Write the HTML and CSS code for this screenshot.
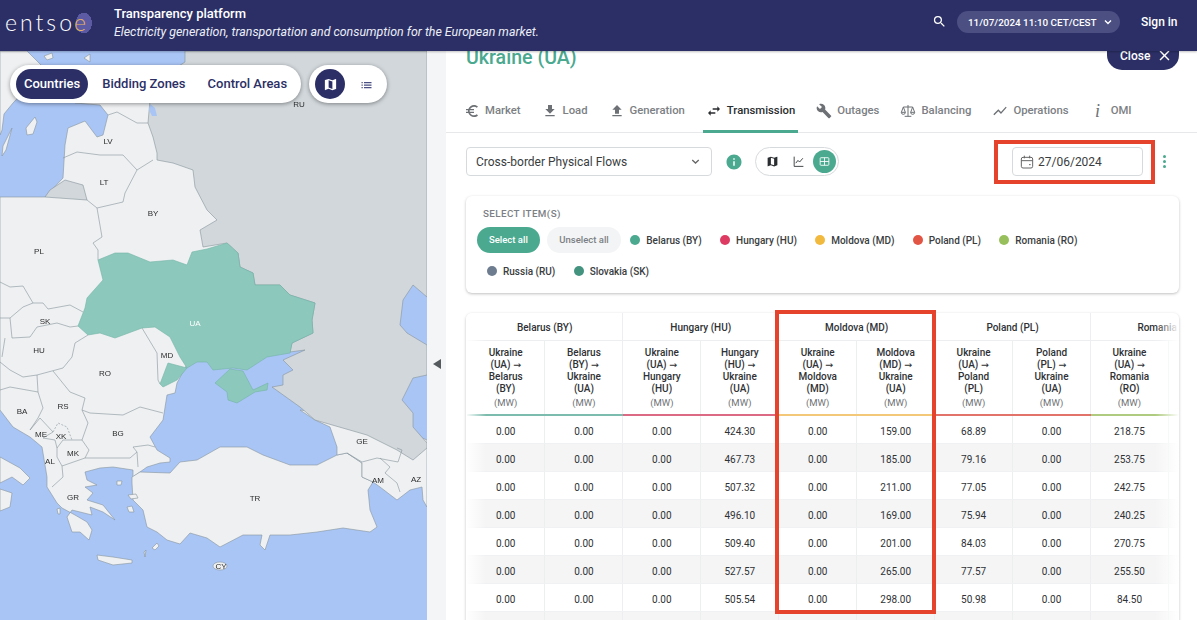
FILE: index.html
```html
<!DOCTYPE html>
<html lang="en">
  <head>
    <meta charset="UTF-8" />
    <title>ENTSO-E Transparency platform</title>
    <link rel="stylesheet" href="styles.css">
  </head>
  <body>
    <header class="topbar">
      <div class="logo">entso<span class="logo-e">e</span></div>
      <div class="brand">
        <div class="brand-title">Transparency platform</div>
        <div class="brand-sub">Electricity generation, transportation and consumption for the European market.</div>
      </div>
      <svg class="top-search" viewBox="0 0 24 24"><path d="M15.5 14h-.79l-.28-.27A6.47 6.47 0 0 0 16 9.5 6.5 6.5 0 1 0 9.5 16c1.61 0 3.09-.59 4.23-1.57l.27.28v.79l5 4.99L20.49 19l-4.99-5zm-6 0C7.01 14 5 11.99 5 9.5S7.01 5 9.5 5 14 7.01 14 9.5 11.99 14 9.5 14z"/></svg>
      <div class="time-pill"><span>11/07/2024 11:10 CET/CEST</span>
        <svg viewBox="0 0 10 10"><polyline points="2.5,3.8 5,6.2 7.5,3.8"/></svg>
      </div>
      <div class="sign-in">Sign in</div>
    </header>

    <main class="layout">
      <section class="map-panel">
        <svg class="map" viewBox="0 51 427 569">
          <rect class="sea" x="0" y="51" width="427" height="569"/>
          <!-- Sweden and Baltic islands -->
          <path class="land" d="M0 51 L27 51 L42 66 L30 85 L13 103 L4 114 L2 130 L0 135 Z"/>
          <path class="land" d="M26 128 L35 117 L37 122 L33 134 L27 135 Z"/>
          <path class="land" d="M12 128 L3 146 L2 156 L6 150 Z"/>
          <path class="land" d="M44 56 L52 53 L53 58 L47 60 Z"/>
          <path class="land" d="M84 58 L90 54 L90 62 Z"/>
          <!-- Main continent -->
          <path class="land" d="M0 197 L45 197 L63 178 L65 145 L68 128 L85 121 L97 137 L103 135 L108 115 L100 105 L75 103 L75 95 L190 95 L240 250 L200 340 L177 383 L175 393 L167 395 L163 420 L150 437 L157 450 L170 458 L170 462 L160 463 L147 467 L133 477 L133 470 L113 467 L100 468 L85 472 L87 480 L97 485 L85 487 L93 493 L87 500 L103 505 L115 520 L103 512 L90 507 L92 515 L72 510 L67 517 L72 532 L80 532 L89 540 L92 530 L87 522 L75 515 L62 508 L57 503 L47 487 L47 477 L42 447 L30 437 L13 427 L0 410 Z"/>
          <!-- Turkey -->
          <path class="land" d="M132 477 L140 472 L170 473 L180 462 L197 460 L220 447 L247 447 L263 455 L290 465 L317 465 L337 455 L347 453 L362 463 L362 477 L373 482 L368 490 L370 510 L377 527 L370 532 L343 528 L317 532 L290 535 L270 535 L265 550 L260 545 L262 535 L243 535 L220 547 L207 538 L190 533 L180 544 L167 540 L157 532 L147 527 L143 510 L133 500 L132 483 Z"/>
          <!-- Caucasus -->
          <path class="land" d="M300 410 L315 420 L330 427 L337 447 L337 455 L347 453 L362 463 L362 477 L373 482 L380 487 L397 500 L410 490 L422 487 L423 500 L427 507 L427 440 L380 420 Z"/>
          <!-- Italy -->
          <path class="land" d="M0 457 L20 468 L30 478 L23 485 L12 477 L0 483 Z"/>
          <path class="land" d="M0 489 L12 493 L10 507 L0 511 Z"/>
          <!-- Islands -->
          <path class="land" d="M97 555 L113 557 L132 560 L132 563 L113 565 L98 560 Z"/>
          <ellipse class="land" cx="220" cy="566" rx="7" ry="4"/>
          <path class="land" d="M152 548 L157 543 L159 546 L155 550 Z"/>
          <path class="land" d="M144 552 L146 550 L145 557 Z"/>
          <path class="land" d="M117 481 L122 481 L121 485 L117 485 Z"/>
          <path class="land" d="M128 495 L136 494 L138 498 L131 499 Z"/>
          <path class="land" d="M127 507 L132 506 L134 512 L129 512 Z"/>
          <path class="land" d="M57 509 L60 508 L60 514 L58 514 Z"/>
          <!-- Kaliningrad -->
          <path class="russia" d="M45 197 L50 190 L65 180 L83 185 L87 200 Z"/>
          <!-- Russia -->
          <path class="russia" d="M185 51 L185 62 L150 85 L150 100 L148 123 L153 137 L157 153 L157 160 L173 163 L193 170 L195 187 L207 210 L217 220 L200 230 L203 247 L227 243 L238 253 L240 267 L253 273 L255 285 L280 285 L290 295 L315 303 L312 320 L313 333 L292 343 L290 352 L305 350 L283 360 L293 370 L283 375 L283 385 L272 387 L300 407 L315 420 L367 435 L397 450 L413 460 L427 448 L427 443 L413 427 L413 413 L402 400 L413 378 L427 375 L427 345 L407 333 L400 325 L403 300 L413 285 L427 297 L427 51 Z"/>
          <path class="sea" d="M150 104 L155 108 L157 116 L152 116 L149 110 Z"/>
          <!-- Borders -->
          <g class="borders">
            <path d="M108 115 L117 112 L137 123 L148 123"/>
            <path d="M63 158 L77 152 L100 155 L123 155 L137 170 L153 160"/>
            <path d="M137 170 L125 193 L123 202 L97 208 L87 200"/>
            <path d="M97 208 L102 237 L93 243 L98 250 L98 260"/>
            <path d="M0 282 L10 287 L23 286 L33 303 L43 303 L48 309 L70 305 L83 312"/>
            <path d="M0 318 L10 318 L23 307 L33 303"/>
            <path d="M10 318 L12 338 L30 337 L37 327 L57 323 L70 327 L78 326"/>
            <path d="M88 335 L75 343 L72 357 L63 368 L37 375 L23 377 L10 370 L0 362"/>
            <path d="M5 338 L2 357"/>
            <path d="M53 371 L70 392 L85 398 L82 410 L90 413 L123 415 L140 407 L163 413"/>
            <path d="M37 375 L38 392 L10 387 L0 390"/>
            <path d="M38 392 L43 408 L38 418 L30 430"/>
            <path d="M82 410 L88 423 L82 440"/>
            <path d="M30 430 L40 418 L53 432 L43 438"/>
            <path d="M43 438 L55 440 L57 448"/>
            <path class="dashed" d="M53 432 L58 423 L67 427 L72 440"/>
            <path d="M57 448 L63 440 L82 440 L89 450 L85 458 L62 466 L57 457 L57 448"/>
            <path d="M62 466 L63 477 L52 487"/>
            <path d="M85 458 L130 458 L137 452 L133 447 L148 445 L155 447"/>
            <path d="M137 452 L138 467"/>
            <path d="M142 328 L157 353 L158 380 L160 384"/>
            <path d="M347 453 L362 462 L377 458 L398 462 L402 450 L397 448"/>
            <path d="M380 458 L390 467 L385 473 L397 483 L400 492"/>
          </g>
          <!-- Ukraine -->
          <path class="ua" d="M98 260 L115 253 L128 253 L150 262 L173 260 L187 265 L192 252 L207 249 L227 243 L238 253 L240 267 L253 273 L255 285 L280 285 L290 295 L315 303 L312 320 L313 333 L292 343 L290 353 L267 357 L247 370 L233 368 L213 370 L207 362 L197 362 L187 368 L180 357 L170 337 L155 327 L142 328 L115 338 L100 333 L88 335 L78 326 L85 308 L87 298 L103 280 Z"/>
          <path class="ua" d="M215 383 L230 369 L243 371 L253 390 L268 383 L267 390 L255 392 L237 403 L228 400 L227 392 Z"/>
          <path class="ua" d="M160 384 L168 363 L187 368 L177 380 L163 387 Z"/>
          <g class="labels">
            <text x="299" y="107">RU</text>
            <text x="108" y="144">LV</text>
            <text x="104" y="185">LT</text>
            <text x="153" y="216">BY</text>
            <text x="39" y="254">PL</text>
            <text x="45" y="324">SK</text>
            <text x="39" y="353">HU</text>
            <text x="105" y="376">RO</text>
            <text x="167" y="358">MD</text>
            <text class="label-ua" x="195" y="326">UA</text>
            <text x="22" y="414">BA</text>
            <text x="63" y="409">RS</text>
            <text x="41" y="437">ME</text>
            <text x="61" y="439">XK</text>
            <text x="73" y="456">MK</text>
            <text x="118" y="436">BG</text>
            <text x="50" y="464">AL</text>
            <text x="73" y="500">GR</text>
            <text x="255" y="501">TR</text>
            <text x="362" y="444">GE</text>
            <text x="378" y="483">AM</text>
            <text x="416" y="482">AZ</text>
            <text x="221" y="569">CY</text>
          </g>
        </svg>

        <div class="map-tools">
          <div class="pill">
            <span class="pill-item active">Countries</span>
            <span class="pill-item">Bidding Zones</span>
            <span class="pill-item">Control Areas</span>
          </div>
          <div class="pill">
            <span class="round-btn active">
              <svg viewBox="0 0 24 24"><path d="M20.5 3l-.16.03L15 5.1 9 3 3.36 4.9c-.21.07-.36.25-.36.48V20.5c0 .28.22.5.5.5l.16-.03L9 18.9l6 2.1 5.64-1.9c.21-.07.36-.25.36-.48V3.5c0-.28-.22-.5-.5-.5zM15 19l-6-2.11V5l6 2.11V19z"/></svg>
            </span>
            <span class="round-btn">
              <svg viewBox="0 0 24 24"><path d="M4 14h2v-2H4v2zm0 4h2v-2H4v2zm0-8h2V8H4v2zm4 4h12v-2H8v2zm0 4h12v-2H8v2zM8 8v2h12V8H8z"/></svg>
            </span>
          </div>
        </div>
      </section>

      <div class="divider"><span class="divider-arrow"></span></div>

      <section class="detail">
        <div class="title-row">
          <h1>Ukraine (UA)</h1>
          <div class="close-btn">Close
            <svg viewBox="0 0 24 24"><path d="M19 6.41L17.59 5 12 10.59 6.41 5 5 6.41 10.59 12 5 17.59 6.41 19 12 13.41 17.59 19 19 17.59 13.41 12z"/></svg>
          </div>
        </div>

        <nav class="tabs">
          <div class="tab"><svg viewBox="0 0 24 24"><path d="M15 18.5c-2.51 0-4.68-1.42-5.76-3.5H15v-2H8.58c-.05-.33-.08-.66-.08-1s.03-.67.08-1H15V9H9.24C10.32 6.92 12.5 5.5 15 5.5c1.61 0 3.09.59 4.23 1.57L21 5.3C19.41 3.87 17.3 3 15 3c-3.92 0-7.24 2.51-8.48 6H3v2h3.06c-.04.33-.06.66-.06 1s.02.67.06 1H3v2h3.52c1.24 3.49 4.56 6 8.48 6 2.31 0 4.41-.87 6-2.3l-1.77-1.77c-1.13.98-2.6 1.57-4.23 1.57z"/></svg>Market</div>
          <div class="tab"><svg viewBox="0 0 24 24"><path d="M19 9h-4V3H9v6H5l7 7 7-7zM5 18v2h14v-2H5z"/></svg>Load</div>
          <div class="tab"><svg viewBox="0 0 24 24"><path d="M9 16h6v-6h4l-7-7-7 7h4v6zm-4 2h14v2H5z"/></svg>Generation</div>
          <div class="tab active"><svg viewBox="0 0 24 24"><path d="M6.99 11L3 15l3.99 4v-3H14v-2H6.99v-3zM21 9l-3.99-4v3H10v2h7.01v3L21 9z"/></svg>Transmission</div>
          <div class="tab"><svg viewBox="0 0 24 24"><path d="M22.7 19l-9.1-9.1c.9-2.3.4-5-1.5-6.9-2-2-5-2.4-7.4-1.3L9 6 6 9 1.6 4.7C.4 7.1.9 10.1 2.9 12.1c1.9 1.9 4.6 2.4 6.9 1.5l9.1 9.1c.4.4 1 .4 1.4 0l2.3-2.3c.5-.4.5-1.1.1-1.4z"/></svg>Outages</div>
          <div class="tab"><svg class="line-icon" viewBox="0 0 24 24"><path d="M12 3v17M5 6h14M7 20h10M5 6l-3 8h6zM19 6l-3 8h6zM2 14a3 3 0 0 0 6 0M16 14a3 3 0 0 0 6 0"/></svg>Balancing</div>
          <div class="tab"><svg viewBox="0 0 24 24"><path d="M3.5 18.49l6-6.01 4 4L22 6.92l-1.41-1.41-7.09 7.97-4-4L2 16.99z"/></svg>Operations</div>
          <div class="tab"><span class="omi-i">i</span>OMI</div>
        </nav>

        <div class="controls">
          <div class="select">Cross-border Physical Flows
            <svg viewBox="0 0 10 10"><polyline points="2.5,3.8 5,6.2 7.5,3.8"/></svg>
          </div>
          <svg class="info" viewBox="0 0 24 24"><path d="M12 2C6.48 2 2 6.48 2 12s4.48 10 10 10 10-4.48 10-10S17.52 2 12 2zm1 15h-2v-6h2v6zm0-8h-2V7h2v2z"/></svg>
          <div class="view-switch">
            <span class="view-btn"><svg viewBox="0 0 24 24"><path d="M20.5 3l-.16.03L15 5.1 9 3 3.36 4.9c-.21.07-.36.25-.36.48V20.5c0 .28.22.5.5.5l.16-.03L9 18.9l6 2.1 5.64-1.9c.21-.07.36-.25.36-.48V3.5c0-.28-.22-.5-.5-.5zM15 19l-6-2.11V5l6 2.11V19z"/></svg></span>
            <span class="view-btn"><svg class="line-icon" viewBox="0 0 24 24"><path d="M4 3v18h17M7 15l4-5 3 3 6-7"/></svg></span>
            <span class="view-btn active"><svg class="line-icon" viewBox="0 0 24 24"><rect x="4" y="5" width="16" height="14" rx="1.5"/><path d="M4 12h16M12 5v14"/></svg></span>
          </div>
          <div class="date-field">
            <svg class="line-icon" viewBox="0 0 24 24"><rect x="3.5" y="5" width="17" height="16" rx="2.5"/><path d="M3.5 10h17M8 2.5v4M16 2.5v4M15 16h2.5"/></svg>
            27/06/2024
          </div>
          <div class="more"><i></i><i></i><i></i></div>
        </div>

        <div class="items-card">
          <div class="items-title">SELECT ITEM(S)</div>
          <div class="items-row">
            <span class="chip chip-on">Select all</span>
            <span class="chip chip-off">Unselect all</span>
            <span class="legend"><i class="dot dot-by"></i>Belarus (BY)</span>
            <span class="legend"><i class="dot dot-hu"></i>Hungary (HU)</span>
            <span class="legend"><i class="dot dot-md"></i>Moldova (MD)</span>
            <span class="legend"><i class="dot dot-pl"></i>Poland (PL)</span>
            <span class="legend"><i class="dot dot-ro"></i>Romania (RO)</span>
          </div>
          <div class="items-row items-row-second">
            <span class="legend"><i class="dot dot-ru"></i>Russia (RU)</span>
            <span class="legend"><i class="dot dot-sk"></i>Slovakia (SK)</span>
          </div>
        </div>

        <div class="table-card">
          <table>
            <thead>
              <tr class="group-row">
                <th colspan="2">Belarus (BY)</th>
                <th colspan="2">Hungary (HU)</th>
                <th colspan="2">Moldova (MD)</th>
                <th colspan="2">Poland (PL)</th>
                <th colspan="2">Romania (RO)</th>
              </tr>
              <tr class="sub-row">
                <th class="bar-by">Ukraine<br>(UA) <span class="arrow">→</span><br>Belarus<br>(BY)<small>(MW)</small></th>
                <th class="bar-by">Belarus<br>(BY) <span class="arrow">→</span><br>Ukraine<br>(UA)<small>(MW)</small></th>
                <th class="bar-hu">Ukraine<br>(UA) <span class="arrow">→</span><br>Hungary<br>(HU)<small>(MW)</small></th>
                <th class="bar-hu">Hungary<br>(HU) <span class="arrow">→</span><br>Ukraine<br>(UA)<small>(MW)</small></th>
                <th class="bar-md">Ukraine<br>(UA) <span class="arrow">→</span><br>Moldova<br>(MD)<small>(MW)</small></th>
                <th class="bar-md">Moldova<br>(MD) <span class="arrow">→</span><br>Ukraine<br>(UA)<small>(MW)</small></th>
                <th class="bar-pl">Ukraine<br>(UA) <span class="arrow">→</span><br>Poland<br>(PL)<small>(MW)</small></th>
                <th class="bar-pl">Poland<br>(PL) <span class="arrow">→</span><br>Ukraine<br>(UA)<small>(MW)</small></th>
                <th class="bar-ro">Ukraine<br>(UA) <span class="arrow">→</span><br>Romania<br>(RO)<small>(MW)</small></th>
                <th class="bar-ro"></th>
              </tr>
            </thead>
            <tbody>
              <tr><td>0.00</td><td>0.00</td><td>0.00</td><td>424.30</td><td>0.00</td><td>159.00</td><td>68.89</td><td>0.00</td><td>218.75</td><td></td></tr>
              <tr><td>0.00</td><td>0.00</td><td>0.00</td><td>467.73</td><td>0.00</td><td>185.00</td><td>79.16</td><td>0.00</td><td>253.75</td><td></td></tr>
              <tr><td>0.00</td><td>0.00</td><td>0.00</td><td>507.32</td><td>0.00</td><td>211.00</td><td>77.05</td><td>0.00</td><td>242.75</td><td></td></tr>
              <tr><td>0.00</td><td>0.00</td><td>0.00</td><td>496.10</td><td>0.00</td><td>169.00</td><td>75.94</td><td>0.00</td><td>240.25</td><td></td></tr>
              <tr><td>0.00</td><td>0.00</td><td>0.00</td><td>509.40</td><td>0.00</td><td>201.00</td><td>84.03</td><td>0.00</td><td>270.75</td><td></td></tr>
              <tr><td>0.00</td><td>0.00</td><td>0.00</td><td>527.57</td><td>0.00</td><td>265.00</td><td>77.57</td><td>0.00</td><td>255.50</td><td></td></tr>
              <tr><td>0.00</td><td>0.00</td><td>0.00</td><td>505.54</td><td>0.00</td><td>298.00</td><td>50.98</td><td>0.00</td><td>84.50</td><td></td></tr>
              <tr><td></td><td></td><td></td><td></td><td></td><td></td><td></td><td></td><td></td><td></td></tr>
            </tbody>
          </table>
          <div class="fade-right"></div>
          <div class="fade-left"></div>
        </div>

        <div class="mark mark-date"></div>
        <div class="mark mark-moldova"></div>
      </section>
    </main>
  </body>
</html>
```

FILE: styles.css
```css
* {
  box-sizing: border-box;
}
html,
body {
  margin: 0;
  height: 620px;
  overflow: hidden;
}
body {
  font-family: "Roboto", "Liberation Sans", sans-serif;
  background: #fff;
  color: #333;
}

/* top bar */
.topbar {
  position: relative;
  z-index: 5;
  height: 51px;
  background: #2b2f66;
  color: #fff;
  display: flex;
  align-items: center;
  box-shadow: 0 1px 2px rgba(0, 0, 0, 0.25);
}
.logo {
  width: 114px;
  padding-left: 5px;
  margin-top: -7px;
  font-family: "Lato", sans-serif;
  font-weight: 300;
  font-size: 23px;
  letter-spacing: 3px;
  white-space: nowrap;
}
.logo-e {
  display: inline-block;
  width: 18px;
  height: 22px;
  margin-left: -1px;
  background: radial-gradient(ellipse 8px 10.5px at 55% 50%, #5c5aa3 98%, transparent 100%);
  color: #e8b35e;
  line-height: 21px;
  letter-spacing: 0;
}
.brand {
  flex: 1;
  margin-top: -6px;
}
.brand-title {
  font-size: 13px;
  font-weight: 500;
  line-height: 18px;
}
.brand-sub {
  font-size: 12.4px;
  font-style: italic;
  line-height: 18px;
  color: #eceef6;
}
.top-search {
  width: 15px;
  height: 15px;
  margin: -8px 10px 0 0;
  fill: #fff;
}
.time-pill {
  width: 163px;
  height: 22px;
  margin-top: -7px;
  padding: 0 6px 0 11px;
  border-radius: 11px;
  background: #4b4f82;
  font-size: 9.9px;
  font-weight: 500;
  white-space: nowrap;
  display: flex;
  align-items: center;
  justify-content: space-between;
}
.time-pill svg {
  width: 12px;
  height: 12px;
  fill: none;
  stroke: #fff;
  stroke-width: 1.2;
}
.sign-in {
  width: 77px;
  margin-top: -7px;
  padding-left: 21px;
  font-size: 12px;
  font-weight: 500;
}

/* layout */
.layout {
  display: flex;
  height: 569px;
}
.map-panel {
  position: relative;
  width: 427px;
  flex: none;
  overflow: hidden;
}
.map {
  display: block;
  width: 427px;
  height: 569px;
  filter: blur(0.3px);
}
.sea {
  fill: #a9c5f6;
  stroke: none;
}
.land {
  fill: #eef0f2;
  stroke: #86939a;
  stroke-width: 0.6;
  stroke-linejoin: round;
}
.russia {
  fill: #d1d7db;
  stroke: #86939a;
  stroke-width: 0.6;
  stroke-linejoin: round;
}
.ua {
  fill: #8cc9bc;
  stroke: #74b3a6;
  stroke-width: 0.6;
  stroke-linejoin: round;
}
.borders path {
  fill: none;
  stroke: #86939a;
  stroke-width: 0.6;
  stroke-linejoin: round;
}
.borders .dashed {
  stroke-dasharray: 2 1.5;
}
.labels text {
  font-family: "Liberation Sans", sans-serif;
  font-size: 8px;
  fill: #2c2c2c;
  text-anchor: middle;
}
.labels .label-ua {
  fill: #fff;
}
.map-tools {
  position: absolute;
  top: 14px;
  left: 10px;
  display: flex;
  gap: 8px;
}
.pill {
  height: 38px;
  background: #fff;
  border-radius: 19px;
  padding: 4px 6px;
  display: flex;
  align-items: center;
  box-shadow: 0 1px 4px rgba(0, 0, 0, 0.4);
}
.pill-item {
  height: 30px;
  line-height: 30px;
  padding: 0 8px;
  margin-right: 6px;
  border-radius: 15px;
  color: #2b2f66;
  font-size: 13px;
  font-weight: 500;
}
.pill-item:last-child {
  margin-right: 0;
}
.pill-item.active {
  background: #2b2f66;
  color: #fff;
}
.round-btn {
  width: 30px;
  height: 30px;
  border-radius: 50%;
  display: flex;
  align-items: center;
  justify-content: center;
  margin-right: 6px;
}
.round-btn:last-child {
  margin-right: 0;
}
.round-btn svg {
  width: 15px;
  height: 15px;
  fill: #4a4e80;
}
.round-btn.active {
  background: #2b2f66;
}
.round-btn.active svg {
  fill: #fff;
}
.divider {
  width: 19px;
  flex: none;
  background: #f4f5f6;
  padding-left: 6px;
  padding-top: 308px;
}
.divider-arrow {
  display: block;
  width: 0;
  height: 0;
  border-top: 5px solid transparent;
  border-bottom: 5px solid transparent;
  border-right: 8px solid #555a5e;
}

/* detail panel */
.detail {
  position: relative;
  flex: 1;
  min-width: 0;
  padding: 0 18px 0 20px;
}
.title-row {
  height: 49px;
  margin: -11px 0 0;
  display: flex;
  justify-content: space-between;
  align-items: flex-start;
}
h1 {
  margin: 6px 0 0;
  font-size: 19.6px;
  font-weight: 500;
  line-height: 24px;
  color: #4aa98f;
}
.close-btn {
  width: 72px;
  height: 30px;
  padding: 1px 0 0 13px;
  border-radius: 0 0 15px 15px;
  background: #2b2f66;
  color: #fff;
  font-size: 12px;
  font-weight: 500;
  display: flex;
  align-items: center;
  gap: 6px;
}
.close-btn svg {
  width: 17px;
  height: 17px;
  fill: #fff;
}
.tabs {
  height: 44px;
  margin: 0 -18px 0 -20px;
  padding-left: 15px;
  border-bottom: 1px solid #e6e8ea;
  display: flex;
}
.tab {
  height: 33px;
  margin-top: 11px;
  padding: 3px 3px 0;
  margin-right: 15px;
  display: flex;
  align-items: flex-start;
  gap: 5px;
  font-size: 11.3px;
  font-weight: 500;
  line-height: 16px;
  color: #7c8084;
}
.tab svg {
  width: 16px;
  height: 16px;
  fill: #6d7175;
  flex: none;
}
.tab .line-icon {
  fill: none;
  stroke: #6d7175;
  stroke-width: 1.5;
}
.tab.active {
  color: #2a2d30;
  border-bottom: 3px solid #4aa98f;
}
.tab.active svg {
  fill: #2a2d30;
}
.omi-i {
  width: 16px;
  text-align: center;
  font-family: "Liberation Serif", serif;
  font-style: italic;
  font-size: 18px;
  line-height: 16px;
  color: #6d7175;
}
.controls {
  height: 29px;
  margin-top: 14px;
  display: flex;
  align-items: center;
}
.select {
  width: 246px;
  height: 29px;
  padding: 0 9px;
  border: 1px solid #d7dadd;
  border-radius: 4px;
  display: flex;
  align-items: center;
  justify-content: space-between;
  font-size: 12px;
  color: #3a3d40;
}
.select svg {
  width: 13px;
  height: 13px;
  fill: none;
  stroke: #666;
  stroke-width: 1;
}
.info {
  width: 18px;
  height: 18px;
  margin-left: 13px;
  fill: #4aa98f;
}
.view-switch {
  width: 84px;
  height: 29px;
  margin-left: 12px;
  padding: 2px;
  border: 1px solid #d7dadd;
  border-radius: 15px;
  display: flex;
  justify-content: flex-end;
  gap: 3px;
}
.view-btn {
  width: 23px;
  height: 23px;
  border-radius: 50%;
  display: flex;
  align-items: center;
  justify-content: center;
}
.view-btn svg {
  width: 13px;
  height: 13px;
  fill: #2a2d30;
}
.view-btn .line-icon {
  fill: none;
  stroke: #2a2d30;
  stroke-width: 1.6;
}
.view-btn.active {
  background: #4aa98f;
}
.view-btn.active .line-icon {
  stroke: #fff;
}
.date-field {
  width: 131px;
  height: 29px;
  margin-left: 173px;
  padding-left: 6px;
  border: 1px solid #d7dadd;
  border-radius: 4px;
  display: flex;
  align-items: center;
  gap: 3px;
  font-size: 12px;
  color: #3a3d40;
}
.date-field svg {
  width: 16px;
  height: 16px;
  fill: none;
  stroke: #666;
  stroke-width: 1.5;
}
.more {
  margin-left: 20px;
  display: flex;
  flex-direction: column;
  gap: 2px;
}
.more i {
  display: block;
  width: 3px;
  height: 3px;
  border-radius: 50%;
  background: #4aa98f;
}
.items-card {
  height: 97px;
  margin-top: 20px;
  padding: 12px 10px 0 11px;
  border-radius: 6px;
  background: #fff;
  box-shadow: 0 1px 3px rgba(0, 0, 0, 0.25);
}
.items-title {
  padding-left: 6px;
  font-size: 9.8px;
  font-weight: 500;
  letter-spacing: 0.4px;
  line-height: 11px;
  color: #7c8084;
}
.items-row {
  margin-top: 8px;
  height: 26px;
  display: flex;
  align-items: center;
}
.items-row-second {
  margin-top: 5px;
  padding-left: 8px;
}
.chip {
  height: 26px;
  line-height: 26px;
  padding: 0 12px;
  border-radius: 13px;
  font-size: 9.5px;
  font-weight: 500;
  margin-right: 7px;
}
.chip-on {
  background: #4aa98f;
  color: #fff;
}
.chip-off {
  padding: 0 12.5px;
  background: #f3f4f5;
  color: #7c8084;
}
.legend {
  display: flex;
  align-items: center;
  margin: 0 16.25px 0 2px;
  font-size: 10px;
  font-weight: 500;
  color: #3a3d40;
}
.dot {
  width: 10px;
  height: 10px;
  margin-right: 6px;
  border-radius: 50%;
}
.dot-by { background: #4aa98f; }
.dot-hu { background: #de3b62; }
.dot-md { background: #f2b93f; }
.dot-pl { background: #e25545; }
.dot-ro { background: #97c05c; }
.dot-ru { background: #6d7c8f; }
.dot-sk { background: #43937f; }

.table-card {
  position: relative;
  height: 320px;
  margin-top: 20px;
  border-radius: 6px;
  background: #fff;
  overflow: hidden;
  box-shadow: 0 1px 3px rgba(0, 0, 0, 0.25);
}
table {
  width: 780px;
  margin-left: 1px;
  table-layout: fixed;
  border-collapse: collapse;
  font-size: 10px;
  color: #2f3235;
}
th,
td {
  text-align: center;
  padding: 0;
  border-right: 1px solid #eceeef;
}
.group-row th {
  height: 27px;
  padding-top: 2px;
  font-weight: 500;
  white-space: nowrap;
  border-bottom: 1px solid #eceeef;
}
.sub-row th {
  height: 75px;
  padding-top: 2px;
  font-weight: 500;
  line-height: 12px;
}
.arrow {
  font-family: "DejaVu Sans", sans-serif;
  font-size: 9.5px;
}
.sub-row small {
  display: block;
  margin-top: 2px;
  font-size: 9.5px;
  font-weight: 400;
  color: #6f7377;
}
.bar-by { border-bottom: 2px solid #7cbcae; }
.bar-hu { border-bottom: 2px solid #dd6a85; }
.bar-md { border-bottom: 2px solid #f3c979; }
.bar-pl { border-bottom: 2px solid #e2736a; }
.bar-ro { border-bottom: 2px solid #aecb7f; }
td {
  height: 28px;
  padding-top: 4px;
  border-bottom: 1px solid #f0f1f2;
}
tbody tr:nth-child(even) td {
  background: #f5f5f5;
}
.fade-right {
  position: absolute;
  top: 0;
  right: 0;
  bottom: 0;
  width: 24px;
  background: linear-gradient(to right, rgba(255, 255, 255, 0), #fff);
}
.fade-left {
  position: absolute;
  top: 0;
  left: 0;
  bottom: 0;
  width: 20px;
  background: linear-gradient(to left, rgba(255, 255, 255, 0), #fff);
}

/* red highlight boxes drawn on top of the page */
.mark {
  position: absolute;
  border: 4px solid #e5432b;
}
.mark-date {
  left: 548px;
  top: 89px;
  width: 161px;
  height: 44px;
}
.mark-moldova {
  left: 329px;
  top: 259px;
  width: 161px;
  height: 304px;
}
```
